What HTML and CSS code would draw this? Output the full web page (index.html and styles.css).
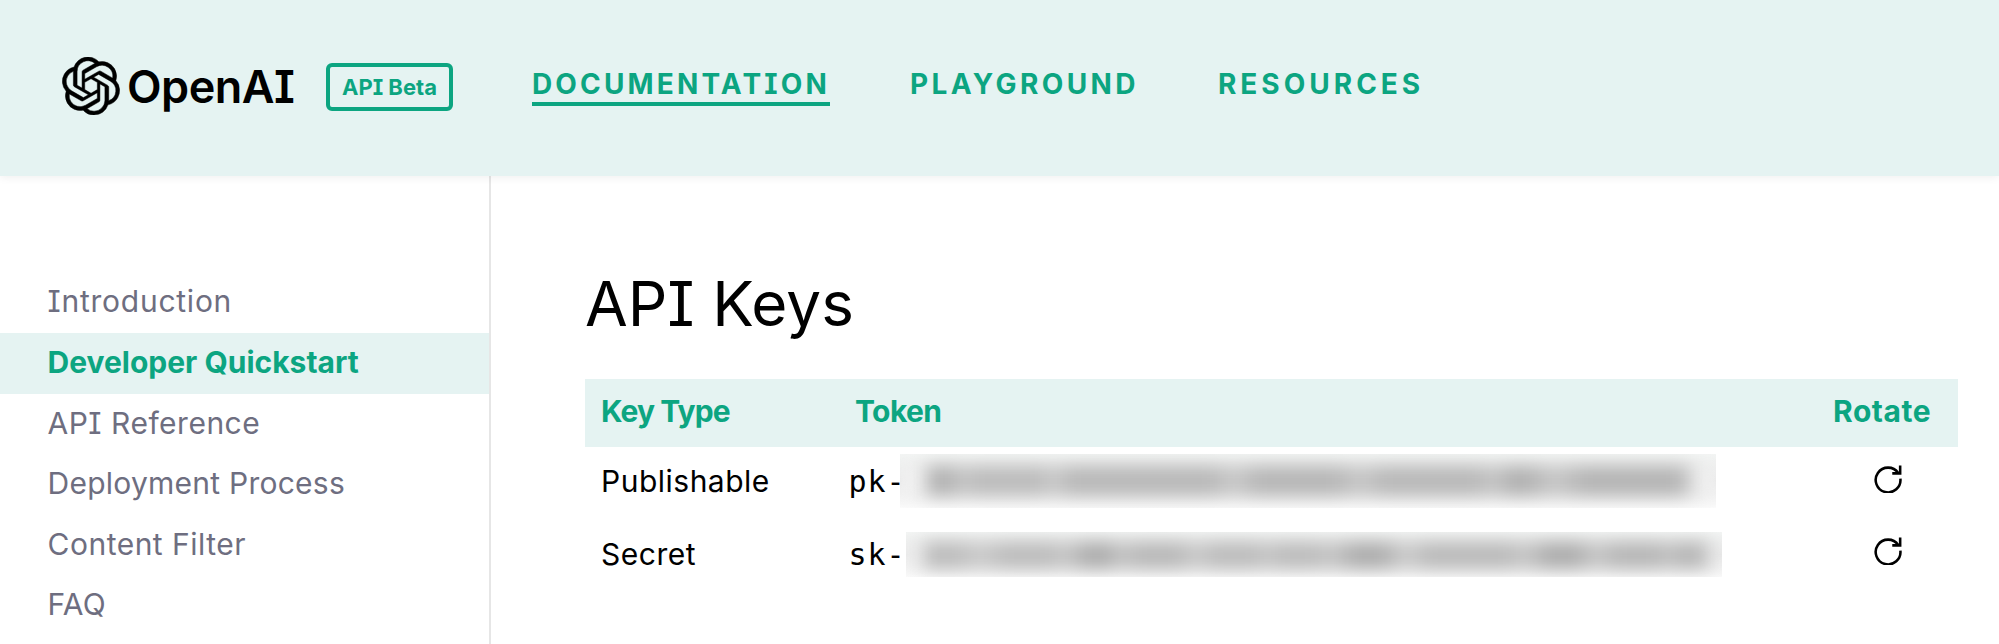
FILE: index.html
```html
<!DOCTYPE html>
<html lang="en">
<head>
<meta charset="utf-8">
<title>OpenAI API</title>
<link rel="stylesheet" href="styles.css">
</head>
<body>
<header class="topbar">
  <a class="brand">
    <svg class="brand-mark" viewBox="0 0 24 24" aria-hidden="true"><path d="M22.2819 9.8211a5.9847 5.9847 0 0 0-.5157-4.9108 6.0462 6.0462 0 0 0-6.5098-2.9A6.0651 6.0651 0 0 0 4.9807 4.1818a5.9847 5.9847 0 0 0-3.9977 2.9 6.0462 6.0462 0 0 0 .7427 7.0966 5.98 5.98 0 0 0 .511 4.9107 6.051 6.051 0 0 0 6.5146 2.9001A5.9847 5.9847 0 0 0 13.2599 24a6.0557 6.0557 0 0 0 5.7718-4.2058 5.9894 5.9894 0 0 0 3.9977-2.9001 6.0557 6.0557 0 0 0-.7475-7.0729zm-9.022 12.6081a4.4755 4.4755 0 0 1-2.8764-1.0408l.1419-.0804 4.7783-2.7582a.7948.7948 0 0 0 .3927-.6813v-6.7369l2.02 1.1686a.071.071 0 0 1 .038.052v5.5826a4.504 4.504 0 0 1-4.4945 4.4944zm-9.6607-4.1254a4.4708 4.4708 0 0 1-.5346-3.0137l.142.0852 4.783 2.7582a.7712.7712 0 0 0 .7806 0l5.8428-3.3685v2.3324a.0804.0804 0 0 1-.0332.0615L9.74 19.9502a4.4992 4.4992 0 0 1-6.1408-1.6464zM2.3408 7.8956a4.485 4.485 0 0 1 2.3655-1.9728V11.6a.7664.7664 0 0 0 .3879.6765l5.8144 3.3543-2.0201 1.1685a.0757.0757 0 0 1-.071 0l-4.8303-2.7865A4.504 4.504 0 0 1 2.3408 7.872zm16.5963 3.8558L13.1038 8.364 15.1192 7.2a.0757.0757 0 0 1 .071 0l4.8303 2.7913a4.4944 4.4944 0 0 1-.6765 8.1042v-5.6772a.79.79 0 0 0-.407-.667zm2.0107-3.0231l-.142-.0852-4.7735-2.7818a.7759.7759 0 0 0-.7854 0L9.409 9.2297V6.8974a.0662.0662 0 0 1 .0284-.0615l4.8303-2.7866a4.4992 4.4992 0 0 1 6.6802 4.66zM8.3065 12.863l-2.02-1.1638a.0804.0804 0 0 1-.038-.0567V6.0742a4.4992 4.4992 0 0 1 7.3757-3.4537l-.142.0805L8.704 5.459a.7948.7948 0 0 0-.3927.6813zm1.0976-2.3654l2.602-1.4998 2.6069 1.4998v2.9994l-2.5974 1.4997-2.6067-1.4997Z"/></svg>
    <span class="brand-name">OpenAI</span>
  </a>
  <span class="badge">API Beta</span>
  <nav class="topnav">
    <a class="topnav-link is-active">DOCUMENTATION</a>
    <a class="topnav-link">PLAYGROUND</a>
    <a class="topnav-link topnav-wide">RESOURCES</a>
  </nav>
</header>
<div class="page">
  <aside class="sidebar">
    <a class="side-link side-loose">Introduction</a>
    <a class="side-link is-current">Developer Quickstart</a>
    <a class="side-link side-mid">API Reference</a>
    <a class="side-link">Deployment Process</a>
    <a class="side-link side-mid">Content Filter</a>
    <a class="side-link">FAQ</a>
  </aside>
  <main class="content">
    <h1 class="title">API Keys</h1>
    <div class="keys">
      <div class="keys-row keys-head">
        <span class="head-type">Key Type</span>
        <span class="head-token">Token</span>
        <span class="head-rotate">Rotate</span>
      </div>
      <div class="keys-row keys-first">
        <span class="key-type">Publishable</span>
        <span class="token"><code class="token-prefix prefix-a">pk-</code><span class="smear smear-a"><i class="smear-ink ink-a"></i></span></span>
        <span class="rotate"><svg class="rotate-icon" viewBox="0 0 30 30" aria-hidden="true"><path d="M24.6 11.2A11.6 11.6 0 1 0 26.6 16.5"/><path d="M26.4 4.2V11.6H19"/></svg></span>
      </div>
      <div class="keys-row keys-second">
        <span class="key-type">Secret</span>
        <span class="token"><code class="token-prefix prefix-b">sk-</code><span class="smear smear-b"><i class="smear-ink ink-b"></i></span></span>
        <span class="rotate"><svg class="rotate-icon" viewBox="0 0 30 30" aria-hidden="true"><path d="M24.6 11.2A11.6 11.6 0 1 0 26.6 16.5"/><path d="M26.4 4.2V11.6H19"/></svg></span>
      </div>
    </div>
  </main>
</div>
</body>
</html>
```
FILE: styles.css
```css
* { box-sizing: border-box; }
html, body { margin: 0; height: 100%; overflow: hidden; }
body {
  font-family: Inter, "Liberation Sans", sans-serif;
  font-feature-settings: "cv08" 1;
  background: #fff;
  color: #000;
}
.topbar {
  position: relative;
  z-index: 1;
  height: 176px;
  background: #e5f3f2;
  box-shadow: 0 2px 8px rgba(0, 0, 0, 0.06);
  display: flex;
  align-items: flex-start;
  padding: 58px 0 0 63px;
}
.brand { display: flex; align-items: center; gap: 7px; height: 56px; width: 230px; flex: none; }
.brand-mark { width: 58px; height: 58px; margin: 0 0 0 -1px; flex: none; fill: #000; stroke: #000; stroke-width: 0.2; display: block; }
.brand-name { font-size: 45px; font-weight: 600; letter-spacing: -0.5px; }
.badge {
  margin: 5px 0 0 33px;
  width: 127px;
  height: 48px;
  flex: none;
  border: 4px solid #0ca581;
  border-radius: 6px;
  color: #0ca581;
  font-size: 22px;
  font-weight: 700;
  display: flex;
  align-items: center;
  justify-content: center;
}
.topnav { display: flex; gap: 80px; margin: 9px 0 0 79px; }
.topnav-link {
  color: #0ca581;
  font-size: 28px;
  font-weight: 700;
  letter-spacing: 3.4px;
  line-height: 34px;
  height: 39px;
}
.topnav-wide { letter-spacing: 4px; margin-left: -1px; }
.topnav-link.is-active {
  letter-spacing: 3.15px;
  border-bottom: 4px solid #0ca581;
  box-sizing: content-box;
  height: 31px;
  padding-bottom: 4px;
}
.page { display: flex; height: 468px; }
.sidebar {
  width: 491px;
  flex: none;
  border-right: 2px solid #e6e6e6;
  padding-top: 96.4px;
}
.side-link {
  display: block;
  height: 60.6px;
  line-height: 58.6px;
  padding-left: 47.5px;
  font-size: 30px;
  letter-spacing: 0.25px;
  color: #6e6e80;
}
.side-loose { letter-spacing: 0.75px; }
.side-mid { letter-spacing: 0.5px; }
.side-link.is-current { background: #e5f3f2; color: #0ca581; font-weight: 700; letter-spacing: 0; }
.content { flex: 1; padding: 91px 41px 0 94px; min-width: 0; }
.title { margin: 0 0 38px; font-size: 62px; font-weight: 400; line-height: 74px; }
.keys-row {
  display: grid;
  grid-template-columns: 250px 1fr 125px;
  align-items: center;
  padding-left: 16px;
  font-size: 30px;
}
.keys-head { height: 68px; padding-bottom: 5px; background: #e5f3f2; color: #0ca581; font-weight: 700; }
.head-type { letter-spacing: -0.9px; }
.head-token { padding-left: 4px; letter-spacing: -0.6px; }
.head-rotate { letter-spacing: 0.55px; }
.keys-first { height: 68px; }
.keys-second { height: 78px; }
.key-type { letter-spacing: 0.5px; }
.token { display: flex; align-items: center; }
.token-prefix {
  flex: none;
  margin-left: -2.5px;
  font-family: "DejaVu Sans Mono", monospace;
  font-size: 30px;
  letter-spacing: 1px;
  white-space: nowrap;
}
.prefix-a { width: 51.5px; }
.prefix-b { width: 57.5px; }
.smear {
  display: block;
  width: 816px;
  overflow: hidden;
  position: relative;
  background: linear-gradient(180deg, #f3f5f4, #e4e4e4 50%, #fbfbfb);
}
.smear-a { height: 54px; }
.smear-b { height: 45px; }
.smear-ink {
  position: absolute;
  left: 0;
  right: 0;
  display: block;
  filter: blur(9px);
}
.ink-a {
  top: 12px;
  bottom: 12px;
  background: linear-gradient(90deg,
    #f4f4f4 0 22px, #b2b2b2 30px 50px, #c8c8c8 62px, #bcbcbc 75px 140px, #cccccc 155px,
    #b8b8b8 170px 310px, #cacaca 335px, #b6b6b6 358px 435px, #c8c8c8 460px,
    #b8b8b8 485px 575px, #c6c6c6 595px, #b0b0b0 612px 625px, #c8c8c8 655px,
    #b4b4b4 685px 780px, #f4f4f4 800px);
}
.ink-b {
  top: 10px;
  bottom: 8px;
  background: linear-gradient(90deg,
    #f4f4f4 0 12px, #bcbcbc 22px 48px, #cccccc 75px, #bcbcbc 100px 142px, #c8c8c8 160px,
    #acacac 182px 200px, #c6c6c6 215px, #b8b8b8 232px 272px, #cccccc 290px,
    #bcbcbc 308px 350px, #c8c8c8 360px, #bcbcbc 375px 405px, #c6c6c6 428px,
    #acacac 450px 475px, #cecece 500px, #bababa 522px 600px, #c8c8c8 620px,
    #acacac 643px 668px, #c8c8c8 690px, #b6b6b6 712px 752px, #c6c6c6 762px,
    #b6b6b6 773px 795px, #f4f4f4 810px);
}
.rotate { display: flex; padding-left: 39px; }
.keys-first .rotate { padding-bottom: 9px; }
.keys-second .rotate { padding-bottom: 11px; }
.rotate-icon { width: 32px; height: 32px; fill: none; stroke: #000; stroke-width: 2.4; display: block; }
```
